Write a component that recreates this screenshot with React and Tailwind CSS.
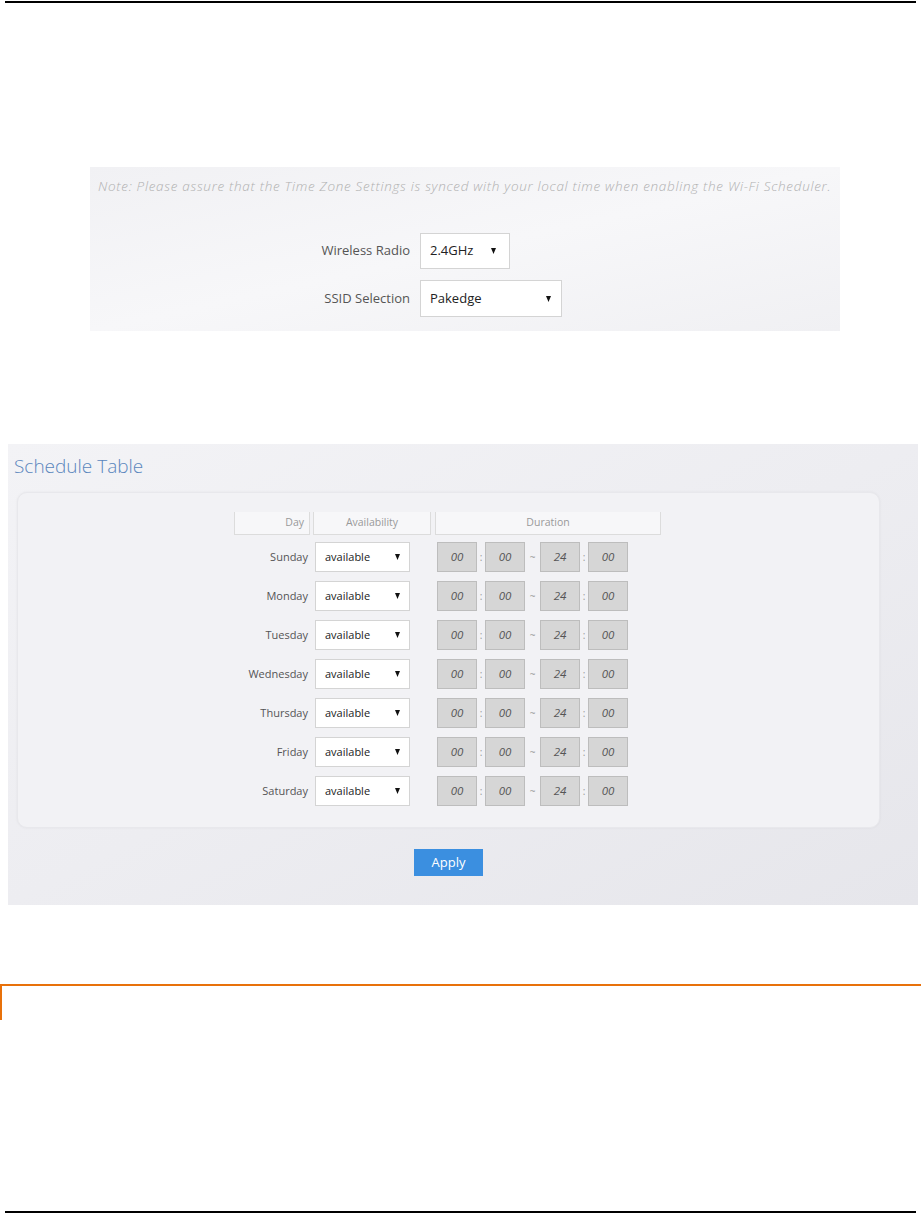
import React from "react";

const days = ["Sunday", "Monday", "Tuesday", "Wednesday", "Thursday", "Friday", "Saturday"];

function Caret() {
  return (
    <svg width="5" height="6" viewBox="0 0 5 6" className="shrink-0">
      <path d="M0 0 H5 L2.5 6 Z" fill="#111" />
    </svg>
  );
}

function TimeBox({ v }) {
  return (
    <div className="w-[40px] h-[30px] bg-[#d6d6d6] border border-[#bdbdbd] flex items-center justify-center italic text-[11.5px] text-[#555]">
      {v}
    </div>
  );
}

export default function App() {
  return (
    <div className="w-[921px] h-[1214px] bg-white relative overflow-hidden" style={{ fontFamily: '"Open Sans", "Noto Sans", sans-serif' }}>
      <div className="pt-[1px] pl-[5px] pr-[5px]">
        <div className="h-[2px] bg-black" />
      </div>

      {/* Top settings panel */}
      <div className="mt-[164px] ml-[90px] w-[750px] h-[164px] bg-gradient-to-br from-[#f1f1f4] via-[#f7f7f9] to-[#f0f0f3] flex flex-col">
        <div className="pt-[10px] pl-[8px] italic font-light text-[13.5px] tracking-[0.7px] text-[#b0b0b0] leading-[18px] whitespace-nowrap">
          Note: Please assure that the Time Zone Settings is synced with your local time when enabling the Wi-Fi Scheduler.
        </div>
        <div className="mt-[38px] flex items-center">
          <div className="w-[320px] text-right text-[13px] text-[#555]">Wireless Radio</div>
          <div className="ml-[10px] w-[90px] h-[36px] bg-white border border-[#d4d4d4] flex items-center justify-between pl-[9px] pr-[13px] text-[13px] text-[#222]">
            <span>2.4GHz</span>
            <Caret />
          </div>
        </div>
        <div className="mt-[11px] flex items-center">
          <div className="w-[320px] text-right text-[13px] text-[#555]">SSID Selection</div>
          <div className="ml-[10px] w-[142px] h-[37px] bg-white border border-[#d4d4d4] flex items-center justify-between pl-[9px] pr-[10px] text-[13px] text-[#222]">
            <span>Pakedge</span>
            <Caret />
          </div>
        </div>
      </div>

      {/* Schedule Table panel */}
      <div className="mt-[113px] ml-[8px] w-[910px] h-[461px] bg-gradient-to-br from-[#f3f3f6] via-[#ededf1] to-[#e6e6eb] flex flex-col">
        <div className="pt-[9px] pl-[6px] text-[19px] font-light text-[#5a86bd] leading-[26px]">Schedule Table</div>
        <div className="mt-[13px] ml-[9px] w-[863px] h-[336px] rounded-[10px] bg-[#f2f2f5] border border-[#e8e8ec] shadow-[0_0_3px_rgba(0,0,0,0.05)] pt-[19px] pl-[216px]">
          <div className="flex h-[23px] text-[10.5px] text-[#999]">
            <div className="w-[76px] border border-t-0 border-[#dcdcdc] bg-[#f7f7f9] flex items-center justify-end pr-[5px]">Day</div>
            <div className="ml-[3px] w-[118px] border border-t-0 border-[#dcdcdc] bg-[#f7f7f9] flex items-center justify-center">Availability</div>
            <div className="ml-[4px] w-[226px] border border-t-0 border-[#dcdcdc] bg-[#f7f7f9] flex items-center justify-center">Duration</div>
          </div>
          <div className="mt-[7px] flex flex-col gap-[9px]">
            {days.map((d) => (
              <div key={d} className="flex items-center h-[30px]">
                <div className="w-[74px] text-right text-[11px] text-[#555]">{d}</div>
                <div className="ml-[7px] w-[95px] h-[30px] bg-white border border-[#d4d4d4] flex items-center justify-between pl-[9px] pr-[9px] text-[11px] text-[#222]">
                  <span>available</span>
                  <Caret />
                </div>
                <div className="ml-[27px] flex items-center">
                  <TimeBox v="00" />
                  <span className="w-[8px] text-center text-[10px] text-[#999]">:</span>
                  <TimeBox v="00" />
                  <span className="w-[15px] text-center text-[10px] text-[#999]">~</span>
                  <TimeBox v="24" />
                  <span className="w-[8px] text-center text-[10px] text-[#999]">:</span>
                  <TimeBox v="00" />
                </div>
              </div>
            ))}
          </div>
        </div>
        <div className="mt-[21px] ml-[406px]">
          <div className="w-[69px] h-[27px] bg-[#3b8fe0] text-white text-[13px] flex items-center justify-center">Apply</div>
        </div>
      </div>

      {/* Orange divider */}
      <div className="mt-[79px] h-[36px] border-t-2 border-l-2 border-[#e8710a]" />

      <div className="absolute left-[5px] right-[5px] top-[1211px] h-[2px] bg-black" />
    </div>
  );
}
